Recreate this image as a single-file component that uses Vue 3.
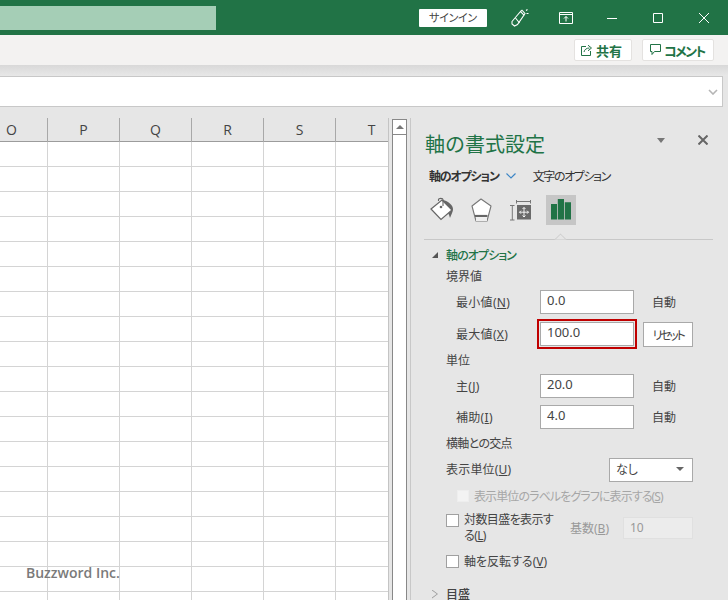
<script setup>
const columns = ["O", "P", "Q", "R", "S", "T"];
const rows = Array.from({ length: 19 }, (_, i) => i);
</script>

<template>
  <div class="app">
    <header class="titlebar">
      <div class="search"></div>
      <button class="signin">サインイン</button>
      <div class="win-btn">
        <svg width="18" height="18" viewBox="0 0 18 18" fill="none" stroke="#fff" stroke-width="1.1">
          <path d="M1 12.500 9.500 2.500 13 6 6.500 15.500 3.500 17 1 15z" />
          <path d="M4.500 9 8.500 14M9.500 2.500 11 1.200 14 4.500 13 6" />
          <path d="M15 1.500 16.500.5M15.500 4.500 17.500 4.500" />
        </svg>
      </div>
      <div class="win-btn">
        <svg width="14" height="12" viewBox="0 0 14 12" fill="none" stroke="#fff">
          <path d="M.5 .5h13v11H.5zM.5 2.500h13" />
          <path d="M7 9.500V4.500M5 6.500 7 4.500 9 6.500" />
        </svg>
      </div>
      <div class="win-btn">
        <svg width="10" height="10" viewBox="0 0 10 10" stroke="#fff"><path d="M0 5.500h10" /></svg>
      </div>
      <div class="win-btn">
        <svg width="10" height="10" viewBox="0 0 10 10" fill="none" stroke="#fff"><path d="M.5 .5h9v9h-9z" /></svg>
      </div>
      <div class="win-btn">
        <svg width="10" height="10" viewBox="0 0 10 10" fill="none" stroke="#fff"><path d="M0 0 10 10M10 0 0 10" /></svg>
      </div>
    </header>

    <div class="ribbon">
      <button class="rb-btn share">
        <svg width="12" height="12" viewBox="0 0 12 12" fill="none" stroke="#217346">
          <path d="M5 2.500H.5v9h9V7" />
          <path d="M3 8C3.500 5.500 5.500 4 8.500 4M7 1.200 10.500 4 7 6.800" />
        </svg>
        <span>共有</span>
      </button>
      <button class="rb-btn comment">
        <svg width="11" height="12" viewBox="0 0 11 12" fill="none" stroke="#217346">
          <path d="M.5 .5h10v7H4.500L2 10.500v-3H.5z" />
        </svg>
        <span>コメント</span>
      </button>
    </div>
    <div class="ribbon-shadow"></div>

    <div class="formula">
      <svg width="10" height="6" viewBox="0 0 10 6" fill="none" stroke="#b5b5b5" stroke-width="1.6">
        <path d="M1 1 5 5 9 1" />
      </svg>
    </div>

    <main class="main">
      <section class="sheet">
        <div class="grid">
          <div class="col-head">
            <div v-for="c in columns" :key="c" class="head-cell">{{ c }}</div>
          </div>
          <div v-for="r in rows" :key="r" class="grid-row">
            <div v-for="c in columns" :key="c" class="cell"></div>
          </div>
        </div>
      </section>

      <div class="scrollbar">
        <div class="scroll-up"><i></i></div>
      </div>

      <aside class="pane">
        <div class="pane-title">
          <h1>軸の書式設定</h1>
          <i class="pane-menu"></i>
          <svg class="pane-close" width="10" height="10" viewBox="0 0 10 10" fill="none" stroke="#666" stroke-width="2">
            <path d="M.5 .5 9.500 9.500M9.500 .5 .5 9.500" />
          </svg>
        </div>

        <div class="tabs">
          <span class="tab active">軸のオプション</span>
          <svg width="10" height="6" viewBox="0 0 10 6" fill="none" stroke="#3d86c6" stroke-width="1.2">
            <path d="M.5 .5 5 5 9.500 .5" />
          </svg>
          <span class="tab other">文字のオプション</span>
        </div>

        <div class="icons">
          <div class="icon">
            <svg width="30" height="30" viewBox="0 0 30 30">
              <path d="M17 5C22 6 27 10 27 14 27 17 25 20 24 23 23 19 21 15 17 12z" fill="#666" />
              <path d="M5 14 16 5 26 15 15 24.500z" fill="#fff" stroke="#666" stroke-width="1.2" />
              <path d="M12.500 6V4.500C12.500 3 17 3 17 4.500V11" fill="none" stroke="#666" stroke-width="1.1" />
              <circle cx="15" cy="12" r="1.3" fill="#666" />
            </svg>
          </div>
          <div class="icon">
            <svg width="30" height="30" viewBox="0 0 30 30">
              <path d="M15 4 25 11 21 26H10L6 11z" fill="#fff" stroke="#777" stroke-width="1.1" stroke-linejoin="round" />
              <path d="M9 21H21.500" stroke="#666" stroke-width="2.2" />
              <path d="M10 23H21V26H10z" fill="#eee" />
            </svg>
          </div>
          <div class="icon">
            <svg width="30" height="30" viewBox="0 0 30 30" fill="none">
              <path d="M10.500 5V8.500M24.500 5V8.500M10.500 6.500H24.500" stroke="#777" />
              <path d="M4 10.500H8.500M4 25H8.500M6.300 10.500V25" stroke="#777" />
              <path d="M11 10H25V24.500H11z" fill="#6a6a6a" />
              <path d="M18 12.500V22M13.500 17.200H22.500M16.500 14 18 12.500 19.500 14M16.500 20.500 18 22 19.500 20.500M15 15.700 13.500 17.200 15 18.700M21 15.700 22.500 17.200 21 18.700" stroke="#fff" stroke-width=".9" />
            </svg>
          </div>
          <div class="icon selected">
            <svg width="30" height="30" viewBox="0 0 30 30" fill="#217346">
              <path d="M5 9H11V24.500H5zM11.800 4H18V24.500H11.800zM18.800 7.300H25V24.500H18.800z" />
            </svg>
          </div>
        </div>
        <div class="divider"><i></i></div>

        <div class="section-head">
          <i class="tri-open"></i>
          <span>軸のオプション</span>
        </div>

        <div class="group first">境界値</div>
        <div class="field m3">
          <label>最小値(<u>N</u>)</label>
          <div class="input">0.0</div>
          <span class="auto">自動</span>
        </div>
        <div class="field m7">
          <label>最大値(<u>X</u>)</label>
          <div class="input marked">100.0</div>
          <button class="reset">リセット</button>
        </div>

        <div class="group m6">単位</div>
        <div class="field m3">
          <label>主(<u>J</u>)</label>
          <div class="input">20.0</div>
          <span class="auto">自動</span>
        </div>
        <div class="field m7">
          <label>補助(<u>I</u>)</label>
          <div class="input">4.0</div>
          <span class="auto">自動</span>
        </div>

        <div class="group m5 cross">横軸との交点</div>
        <div class="unit-row">
          <span class="unit-label">表示単位(<u>U</u>)</span>
          <div class="select">
            <span>なし</span>
            <i></i>
          </div>
        </div>

        <div class="check-row disabled">
          <i class="box"></i>
          <span>表示単位のラベルをグラフに表示する(<u>S</u>)</span>
        </div>

        <div class="log-row">
          <i class="box"></i>
          <span class="log-text">対数目盛を表示する(<u>L</u>)</span>
          <span class="base-label">基数(<u>B</u>)</span>
          <div class="base-input">10</div>
        </div>

        <div class="check-row reverse">
          <i class="box"></i>
          <span>軸を反転する(<u>V</u>)</span>
        </div>

        <div class="section-head closed">
          <i class="tri-closed"></i>
          <span>目盛</span>
        </div>
      </aside>
    </main>

    <div class="watermark">Buzzword Inc.</div>
  </div>
</template>

<style>
html,
body {
  margin: 0;
  background: #e6e6e6;
}
</style>

<style scoped>
.app {
  position: relative;
  display: flex;
  flex-direction: column;
  width: 728px;
  height: 600px;
  overflow: hidden;
  background: #e6e6e6;
  color: #444;
  font-family: "Noto Sans", "Noto Sans CJK JP", sans-serif;
  font-size: 12px;
  font-feature-settings: "palt";
}

button {
  font-family: inherit;
  font-feature-settings: inherit;
  padding: 0;
}

.titlebar {
  display: flex;
  align-items: center;
  flex: none;
  height: 35px;
  padding-right: 1px;
  background: #217346;
}

.search {
  width: 216px;
  height: 24px;
  margin-right: auto;
  background: #a5ceb6;
}

.signin {
  width: 68px;
  height: 18px;
  margin-right: 10px;
  border: 0;
  border-radius: 1px;
  background: #fff;
  color: #444;
  font-size: 11px;
  line-height: 18px;
  letter-spacing: -.3px;
}

.win-btn {
  display: flex;
  align-items: center;
  justify-content: center;
  width: 46px;
  height: 35px;
}

.ribbon {
  display: flex;
  flex: none;
  justify-content: flex-end;
  gap: 10px;
  height: 30px;
  padding: 4px 14px 0 0;
  box-sizing: border-box;
  background: #f3f2f1;
}

.rb-btn {
  display: flex;
  align-items: center;
  height: 22px;
  border: 1px solid #e4e2e0;
  border-radius: 2px;
  background: #fff;
  color: #217346;
  font-size: 13px;
  font-weight: 700;
  box-sizing: border-box;
}

.share {
  gap: 3px;
  width: 58px;
  padding-left: 6px;
}

.comment {
  gap: 3px;
  width: 72px;
  padding-left: 7px;
  letter-spacing: -1.600px;
}

.ribbon-shadow {
  flex: none;
  height: 11px;
  background: linear-gradient(#d8d8d8, #e8e8e8);
}

.formula {
  display: flex;
  align-items: center;
  justify-content: flex-end;
  flex: none;
  height: 31px;
  margin-right: 5px;
  padding-right: 4px;
  border: 1px solid #c8c8c8;
  border-left: 0;
  background: #fff;
  box-sizing: border-box;
}

.main {
  display: flex;
  flex: none;
  height: 482px;
  margin-top: 11px;
}

.sheet {
  flex: none;
  width: 389px;
  overflow: hidden;
  border-right: 1px solid #c4c4c4;
  box-sizing: border-box;
}

.grid {
  width: 432px;
  margin-left: -24px;
}

.col-head,
.grid-row {
  display: grid;
  grid-template-columns: repeat(6, 72px);
}

.col-head {
  height: 24px;
  border-bottom: 1px solid #9c9c9c;
  box-sizing: border-box;
}

.head-cell {
  border-right: 1px solid #a8a8a8;
  color: #444;
  font-family: "Open Sans", sans-serif;
  font-size: 14px;
  line-height: 24px;
  text-align: center;
}

.grid-row {
  background: #fff;
}

.cell {
  height: 25px;
  border-right: 1px solid #d4d4d4;
  border-bottom: 1px solid #d4d4d4;
  box-sizing: border-box;
}

.scrollbar {
  flex: none;
  width: 15px;
  margin: 1px 0 0 3px;
  border: 1px solid #888;
  border-bottom: 0;
  background: #fff;
  box-sizing: border-box;
}

.scroll-up {
  display: flex;
  align-items: center;
  justify-content: center;
  height: 14px;
  border-bottom: 1px solid #888;
}

.scroll-up i {
  border: 4px solid transparent;
  border-top: 0;
  border-bottom: 4px solid #777;
}

.pane {
  flex: 1;
  height: 482px;
  margin-left: 3px;
  padding: 12px 0 0 14px;
  overflow: hidden;
  border-left: 1px solid #c8c8c8;
  box-sizing: border-box;
}

.pane-title {
  display: flex;
  align-items: center;
  height: 30px;
}

.pane-title h1 {
  margin: 0;
  color: #217346;
  font-size: 20px;
  font-weight: 400;
  font-feature-settings: normal;
  line-height: 30px;
}

.pane-menu {
  margin: -9px 0 0 auto;
  border: 4.500px solid transparent;
  border-top: 5px solid #777;
  border-bottom: 0;
}

.pane-close {
  margin: -10px 20px 0 33px;
}

.tabs {
  display: flex;
  align-items: center;
  height: 20px;
  margin: 6px 0 0 4px;
  color: #333;
  font-size: 12px;
}

.tabs svg {
  margin-left: 7px;
}

.tab {
  letter-spacing: -1.200px;
}

.tab.active {
  font-weight: 700;
}

.tab.other {
  margin-left: 17px;
  letter-spacing: -1.400px;
}

.icons {
  display: flex;
  gap: 10px;
  height: 30px;
  margin: 9px 0 0 1px;
}

.icon {
  width: 30px;
  height: 30px;
}

.icon.selected {
  background: #c6c6c6;
}

.icon svg {
  display: block;
}

.divider {
  position: relative;
  width: 289px;
  height: 1px;
  margin: 14px 0 0 -1px;
  background: #c8c8c8;
}

.divider i {
  position: absolute;
  left: 132px;
  top: -4px;
  width: 8px;
  height: 8px;
  border-left: 1px solid #c8c8c8;
  border-top: 1px solid #c8c8c8;
  background: #e6e6e6;
  transform: rotate(45deg);
  clip-path: polygon(0 0, 100% 0, 0 100%);
}

.section-head {
  display: flex;
  align-items: center;
  height: 20px;
  margin-top: 5px;
  color: #217346;
  font-size: 12px;
  font-weight: 500;
  letter-spacing: -.9px;
}

.section-head span {
  margin-left: 8px;
}

.section-head.closed {
  margin-top: 13px;
  color: #444;
  letter-spacing: 0;
}

.tri-open {
  width: 6px;
  height: 6px;
  margin-left: 7px;
  background: #555;
  clip-path: polygon(100% 0, 100% 100%, 0 100%);
}

.tri-closed {
  width: 6px;
  height: 9px;
  margin-left: 7px;
  background: #999;
  clip-path: polygon(0 0, 100% 50%, 0 100%, 0 90%, 80% 50%, 0 10%);
}

.group {
  height: 20px;
  margin-left: 21px;
  line-height: 20px;
}

.cross {
  letter-spacing: -.7px;
}

.first {
  margin-top: 2px;
}

.m3 {
  margin-top: 3px;
}

.m5 {
  margin-top: 5px;
}

.m6 {
  margin-top: 6px;
}

.m7 {
  margin-top: 7px;
}

.field {
  display: grid;
  grid-template-columns: 84px 94px auto;
  align-items: center;
  height: 24px;
  padding-left: 31px;
}

.field label {
  letter-spacing: .3px;
  white-space: nowrap;
}

.input {
  height: 24px;
  padding-left: 6px;
  border: 1px solid #a9a9a9;
  background: #fff;
  font-size: 13px;
  line-height: 19px;
  box-sizing: border-box;
}

.input.marked {
  outline: 2px solid #c00000;
  outline-offset: 1px;
}

.auto {
  margin-left: 18px;
}

.reset {
  width: 50px;
  height: 25px;
  margin: 1px 0 0 9px;
  border: 1px solid #a9a9a9;
  background: #fff;
  color: #444;
  font-size: 12px;
  letter-spacing: -2.300px;
}

.unit-row {
  display: flex;
  align-items: center;
  justify-content: space-between;
  width: 247px;
  height: 24px;
  margin: 4px 0 0 21px;
}

.unit-label {
  padding-bottom: 2px;
  letter-spacing: .2px;
}

.select {
  display: flex;
  align-items: center;
  justify-content: space-between;
  width: 84px;
  height: 24px;
  padding: 0 8px 2px 6px;
  border: 1px solid #a9a9a9;
  background: #fff;
  box-sizing: border-box;
}

.select i {
  border: 4px solid transparent;
  border-top: 4px solid #666;
  border-bottom: 0;
}

.box {
  flex: none;
  width: 13px;
  height: 13px;
  border: 1px solid #a0a0a0;
  background: #fff;
  box-sizing: border-box;
}

.check-row {
  display: flex;
  align-items: center;
  gap: 5px;
  height: 20px;
  margin-left: 21px;
  white-space: nowrap;
}

.check-row.disabled {
  margin: 4px 0 0 32px;
  color: #a6a6a6;
  letter-spacing: -.9px;
}

.check-row.disabled .box {
  width: 12px;
  height: 12px;
  border-color: #eee;
  background: #f3f3f3;
}

.check-row.reverse {
  margin-top: 7px;
}

.log-row {
  display: flex;
  align-items: center;
  height: 32px;
  margin: 6px 0 0 21px;
}

.log-row .box {
  align-self: flex-start;
  margin-top: 2px;
}

.log-text {
  width: 91px;
  margin-left: 5px;
  letter-spacing: -.6px;
  line-height: 16px;
}

.base-label {
  width: 53px;
  margin-left: 15px;
  color: #999;
}

.base-input {
  width: 70px;
  height: 22px;
  padding-left: 6px;
  border: 1px solid #e0e0e0;
  background: #ececec;
  color: #999;
  line-height: 20px;
  box-sizing: border-box;
}

.watermark {
  position: absolute;
  left: 26px;
  top: 563px;
  color: #7a7a7a;
  font-family: "Open Sans", sans-serif;
  font-size: 14px;
  font-weight: 600;
  line-height: 20px;
}
</style>
